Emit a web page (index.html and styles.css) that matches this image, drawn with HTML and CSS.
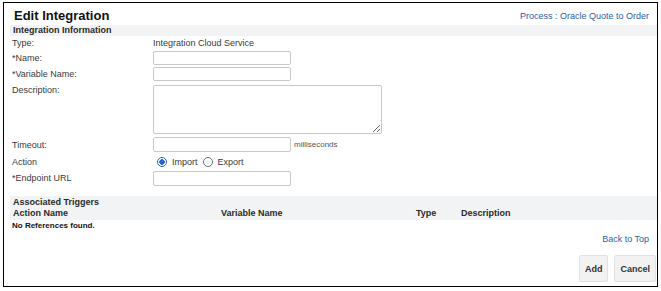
FILE: index.html
```html
<!DOCTYPE html>
<html lang="en">

<head>
    <meta charset="UTF-8">
    <meta name="viewport" content="width=device-width, initial-scale=1.0">
    <title>Edit Integration</title>
    <link rel="stylesheet" href="styles.css">
</head>

<body>
    <div class="frame">
        <div class="page-header">
            <h1 class="title">Edit Integration</h1>
            <a class="link" href="#">Process : Oracle Quote to Order</a>
        </div>

        <div class="band">Integration Information</div>
        <div class="form">
            <div class="row row-type">
                <span class="label">Type:</span>
                <span class="value">Integration Cloud Service</span>
            </div>
            <div class="row row-input">
                <label class="label" for="name">*Name:</label>
                <input type="text" id="name" class="field">
            </div>
            <div class="row row-input">
                <label class="label" for="varname">*Variable Name:</label>
                <input type="text" id="varname" class="field">
            </div>
            <div class="row row-desc">
                <label class="label" for="desc">Description:</label>
                <textarea id="desc" class="area"></textarea>
            </div>
            <div class="row row-timeout">
                <label class="label" for="timeout">Timeout:</label>
                <input type="text" id="timeout" class="field field-tall">
                <span class="unit">milliseconds</span>
            </div>
            <div class="row row-action">
                <span class="label">Action</span>
                <div class="radios">
                    <input type="radio" name="action" id="imp" class="radio" checked>
                    <label for="imp">Import</label>
                    <input type="radio" name="action" id="exp" class="radio">
                    <label for="exp">Export</label>
                </div>
            </div>
            <div class="row row-endpoint">
                <label class="label" for="url">*Endpoint URL</label>
                <input type="text" id="url" class="field field-tall">
            </div>
        </div>

        <div class="band band-triggers">
            <div class="band-title">Associated Triggers</div>
            <div class="cols">
                <span>Action Name</span>
                <span>Variable Name</span>
                <span>Type</span>
                <span>Description</span>
            </div>
        </div>
        <div class="empty">No References found.</div>

        <div class="back"><a class="link" href="#">Back to Top</a></div>

        <div class="actions">
            <button class="btn">Add</button>
            <button class="btn">Cancel</button>
        </div>
    </div>
</body>

</html>
```

FILE: styles.css
```css
body {
    margin: 0;
    font-family: "Liberation Sans", Arial, sans-serif;
    font-size: 9px;
    color: #3a3a3a;
}

.frame {
    box-sizing: border-box;
    width: 655px;
    height: 285px;
    margin: 2px 0 0 3px;
    padding-left: 6px;
    border: 1px solid #000;
}

.page-header {
    display: flex;
    justify-content: space-between;
    align-items: center;
    height: 22px;
    padding: 0 8px 0 4px;
}

.title {
    margin: 0;
    padding-top: 3px;
    font-size: 13px;
    line-height: 16px;
    color: #111;
}

.link {
    color: #2e5d9f;
    text-decoration: none;
}

.page-header .link {
    padding-top: 4px;
}

.band {
    background-color: #f2f3f4;
    padding-left: 3px;
    font-weight: bold;
    line-height: 11px;
    color: #2a2a2a;
}

.form {
    padding-left: 2px;
}

.row {
    display: flex;
    align-items: center;
}

.label {
    width: 141px;
    flex-shrink: 0;
}

.row-type {
    height: 14px;
}

.row-input {
    height: 16px;
}

.field {
    box-sizing: border-box;
    width: 138px;
    height: 14px;
    margin: 0;
    padding: 0 3px;
    border: 1px solid #c9c9c9;
    border-radius: 2px;
    font: inherit;
}

.field-tall {
    height: 15px;
}

.row-desc {
    align-items: flex-start;
    height: 54px;
}

.row-desc .label {
    margin-top: 3px;
    line-height: 10px;
}

.area {
    box-sizing: border-box;
    width: 229px;
    height: 49px;
    margin: 3px 0 0;
    padding: 2px 3px;
    border: 1px solid #c9c9c9;
    border-radius: 2px;
    font: inherit;
}

.row-timeout {
    height: 17px;
}

.unit {
    margin-left: 3px;
    font-size: 8px;
    color: #555;
}

.row-action {
    height: 17px;
}

.radios {
    display: flex;
    align-items: center;
    gap: 5px;
    padding-left: 4px;
}

.radio {
    appearance: none;
    box-sizing: border-box;
    width: 10px;
    height: 10px;
    margin: 0;
    border: 1px solid #6f6f6f;
    border-radius: 50%;
    background-color: #fff;
}

.radio:checked {
    border-color: #2a62c9;
    background: radial-gradient(circle, #2a62c9 0 2.5px, #fff 3px);
}

.row-endpoint {
    height: 16px;
}

.band-triggers {
    margin-top: 10px;
    padding-bottom: 1px;
}

.band-title {
    line-height: 12px;
}

.cols {
    display: grid;
    grid-template-columns: 208px 195px 45px 1fr;
    line-height: 11px;
}

.empty {
    padding-left: 2px;
    font-size: 8px;
    font-weight: bold;
    line-height: 12px;
    color: #111;
}

.back {
    margin-top: 1px;
    padding-right: 8px;
    text-align: right;
    line-height: 12px;
}

.actions {
    display: flex;
    justify-content: flex-end;
    gap: 6px;
    margin-top: 10px;
    padding-right: 1px;
}

.btn {
    height: 27px;
    padding: 0 5px;
    border: 1px solid #e2e2e2;
    border-radius: 2px;
    background-color: #f2f2f2;
    font-family: inherit;
    font-size: 9px;
    font-weight: bold;
    color: #333;
}
```
